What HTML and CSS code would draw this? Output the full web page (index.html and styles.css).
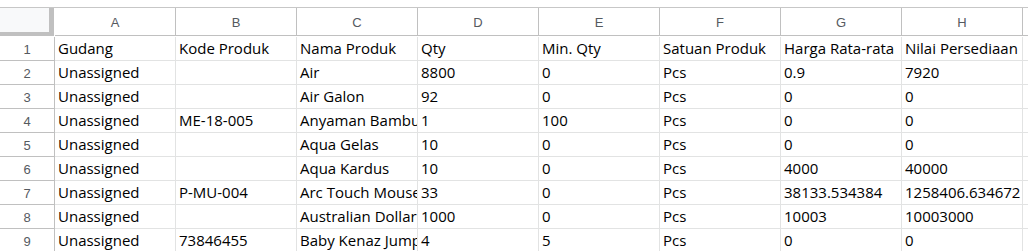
FILE: index.html
```html
<!DOCTYPE html>
<html>
<head>
<meta charset="utf-8">
<link rel="stylesheet" href="styles.css">
</head>
<body>
<div class="sheet">
  <div class="grid">
    <div class="corner"></div>
    <div class="colhead">A</div>
    <div class="colhead">B</div>
    <div class="colhead">C</div>
    <div class="colhead">D</div>
    <div class="colhead">E</div>
    <div class="colhead">F</div>
    <div class="colhead">G</div>
    <div class="colhead">H</div>
    <div class="colhead rest"></div>

    <div class="rowhead">1</div>
    <div class="cell">Gudang</div><div class="cell">Kode Produk</div><div class="cell">Nama Produk</div><div class="cell">Qty</div><div class="cell">Min. Qty</div><div class="cell">Satuan Produk</div><div class="cell">Harga Rata-rata</div><div class="cell">Nilai Persediaan</div><div class="cell rest"></div>

    <div class="rowhead">2</div>
    <div class="cell">Unassigned</div><div class="cell"></div><div class="cell">Air</div><div class="cell">8800</div><div class="cell">0</div><div class="cell">Pcs</div><div class="cell">0.9</div><div class="cell">7920</div><div class="cell rest"></div>

    <div class="rowhead">3</div>
    <div class="cell">Unassigned</div><div class="cell"></div><div class="cell">Air Galon</div><div class="cell">92</div><div class="cell">0</div><div class="cell">Pcs</div><div class="cell">0</div><div class="cell">0</div><div class="cell rest"></div>

    <div class="rowhead">4</div>
    <div class="cell">Unassigned</div><div class="cell">ME-18-005</div><div class="cell">Anyaman Bambu</div><div class="cell">1</div><div class="cell">100</div><div class="cell">Pcs</div><div class="cell">0</div><div class="cell">0</div><div class="cell rest"></div>

    <div class="rowhead">5</div>
    <div class="cell">Unassigned</div><div class="cell"></div><div class="cell">Aqua Gelas</div><div class="cell">10</div><div class="cell">0</div><div class="cell">Pcs</div><div class="cell">0</div><div class="cell">0</div><div class="cell rest"></div>

    <div class="rowhead">6</div>
    <div class="cell">Unassigned</div><div class="cell"></div><div class="cell">Aqua Kardus</div><div class="cell">10</div><div class="cell">0</div><div class="cell">Pcs</div><div class="cell">4000</div><div class="cell">40000</div><div class="cell rest"></div>

    <div class="rowhead">7</div>
    <div class="cell">Unassigned</div><div class="cell">P-MU-004</div><div class="cell">Arc Touch Mouse</div><div class="cell">33</div><div class="cell">0</div><div class="cell">Pcs</div><div class="cell">38133.534384</div><div class="cell">1258406.634672</div><div class="cell rest"></div>

    <div class="rowhead">8</div>
    <div class="cell">Unassigned</div><div class="cell"></div><div class="cell">Australian Dollar</div><div class="cell">1000</div><div class="cell">0</div><div class="cell">Pcs</div><div class="cell">10003</div><div class="cell">10003000</div><div class="cell rest"></div>

    <div class="rowhead">9</div>
    <div class="cell">Unassigned</div><div class="cell">73846455</div><div class="cell">Baby Kenaz Jumper</div><div class="cell">4</div><div class="cell">5</div><div class="cell">Pcs</div><div class="cell">0</div><div class="cell">0</div><div class="cell rest"></div>
  </div>
</div>
</body>
</html>
```

FILE: styles.css
```css
html, body {
  margin: 0;
  padding: 0;
  background: #ffffff;
  overflow: hidden;
}

.sheet {
  padding-top: 7px;
}

.grid {
  display: grid;
  grid-template-columns: 55px repeat(8, 121px) 1fr;
  grid-template-rows: 29px repeat(9, 24px);
  border-top: 1px solid #c7c7c7;
}

.corner {
  box-sizing: border-box;
  background: #f8f9fa;
  border-right: 5px solid #c0c0c0;
  border-bottom: 4px solid #c0c0c0;
  height: 28px;
  margin-right: 1px;
}

.colhead {
  box-sizing: border-box;
  border-right: 1px solid #c0c0c0;
  border-bottom: 1px solid #c0c0c0;
  height: 28px;
  display: flex;
  align-items: center;
  justify-content: center;
  font-family: "Liberation Sans", Arial, sans-serif;
  font-size: 13px;
  color: #555a5f;
  padding-top: 1px;
}

.rowhead {
  box-sizing: border-box;
  border-right: 1px solid #c0c0c0;
  border-bottom: 1px solid #c0c0c0;
  display: flex;
  align-items: center;
  justify-content: center;
  font-family: "Liberation Sans", Arial, sans-serif;
  font-size: 13px;
  color: #555a5f;
  padding-top: 1px;
}

.cell {
  box-sizing: border-box;
  border-right: 1px solid #e2e3e3;
  border-bottom: 1px solid #e2e3e3;
  font-family: "Open Sans", "Noto Sans", sans-serif;
  font-size: 15px;
  color: #000000;
  white-space: nowrap;
  overflow: hidden;
  padding: 1px 3px 0 3px;
  line-height: 21px;
}

.rest {
  border-right: none;
}
```
